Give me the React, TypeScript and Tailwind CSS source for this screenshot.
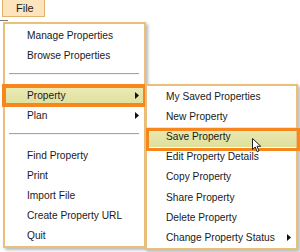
import React from 'react';

type Item = { label: string; arrow?: boolean; sep?: boolean; active?: boolean };

const fileItems: Item[] = [
  { label: 'Manage Properties' },
  { label: 'Browse Properties' },
  { label: '', sep: true },
  { label: 'Property', arrow: true, active: true },
  { label: 'Plan', arrow: true },
  { label: '', sep: true },
  { label: 'Find Property' },
  { label: 'Print' },
  { label: 'Import File' },
  { label: 'Create Property URL' },
  { label: 'Quit' },
];

const propertyItems: Item[] = [
  { label: 'My Saved Properties' },
  { label: 'New Property' },
  { label: 'Save Property', active: true },
  { label: 'Edit Property Details' },
  { label: 'Copy Property' },
  { label: 'Share Property' },
  { label: 'Delete Property' },
  { label: 'Change Property Status', arrow: true },
];

function Arrow() {
  return (
    <svg width="4" height="7" viewBox="0 0 4 7" className="shrink-0">
      <path d="M0 0 L4 3.5 L0 7 Z" fill="#111" />
    </svg>
  );
}

function Cursor() {
  return (
    <svg width="11" height="15" viewBox="0 0 11 15" className="absolute left-[252px] top-[138px]">
      <path
        d="M0.5 0.5 L0.5 11.5 L3.2 9 L5.2 13.8 L7 13 L5 8.3 L8.8 8.3 Z"
        fill="#fff"
        stroke="#222"
        strokeWidth="1"
        strokeLinejoin="round"
      />
    </svg>
  );
}

function Row({ item, pl, h, box }: { item: Item; pl: string; h: string; box: string }) {
  if (item.sep) {
    return (
      <div className="h-[20px] pt-[7px] pl-[4px] pr-[5px]">
        <div className="border-t border-t-[#a4a4a4] border-b border-b-[#f4f4f4]" />
      </div>
    );
  }
  return (
    <div
      className={`relative flex items-center justify-between ${h} ${pl} pr-[5px] ${
        item.active ? 'bg-gradient-to-b from-[#ebebb6] to-[#dfdf9c]' : ''
      }`}
    >
      <span>{item.label}</span>
      {item.arrow && <Arrow />}
      {item.active && <div className={`pointer-events-none absolute border-[#f7861c] ${box}`} />}
    </div>
  );
}

export default function App() {
  return (
    <div
      className="relative h-[252px] w-[300px] overflow-hidden bg-white text-[10.2px] leading-[20px] text-[#1a1a1a]"
      style={{ fontFamily: '"Liberation Sans", Arial, sans-serif' }}
    >
      <div className="ml-[2px] flex h-[17px] w-[43px] items-center border border-t-0 border-[#e2b36c] bg-[#fde4bc] pl-[13px] text-[11px]">
        File
      </div>
      <div className="absolute left-0 top-[20px] h-px w-[8px] bg-[#777]" />

      <div className="ml-[3px] mt-[5px] w-[143px] border-2 border-[#eabf7a] bg-white pt-[1.5px] shadow-[2px_2px_3px_rgba(0,0,0,0.28)]">
        {fileItems.map((it, i) => (
          <Row
            key={i}
            item={it}
            pl="pl-[22px]"
            h="h-[20px]"
            box="-left-[3.5px] -right-[3px] -top-[1.3px] -bottom-[1.3px] border-4"
          />
        ))}
      </div>

      <div className="absolute left-[145px] top-[84px] w-[153px] border-2 border-[#eabf7a] bg-white pt-px shadow-[2px_2px_3px_rgba(0,0,0,0.28)]">
        {propertyItems.map((it, i) => (
          <Row
            key={i}
            item={it}
            pl="pl-[19px]"
            h="h-[20.1px]"
            box="-left-[1px] -right-[4px] top-[1px] -bottom-[4px] border-[3.5px]"
          />
        ))}
      </div>

      <Cursor />
    </div>
  );
}
